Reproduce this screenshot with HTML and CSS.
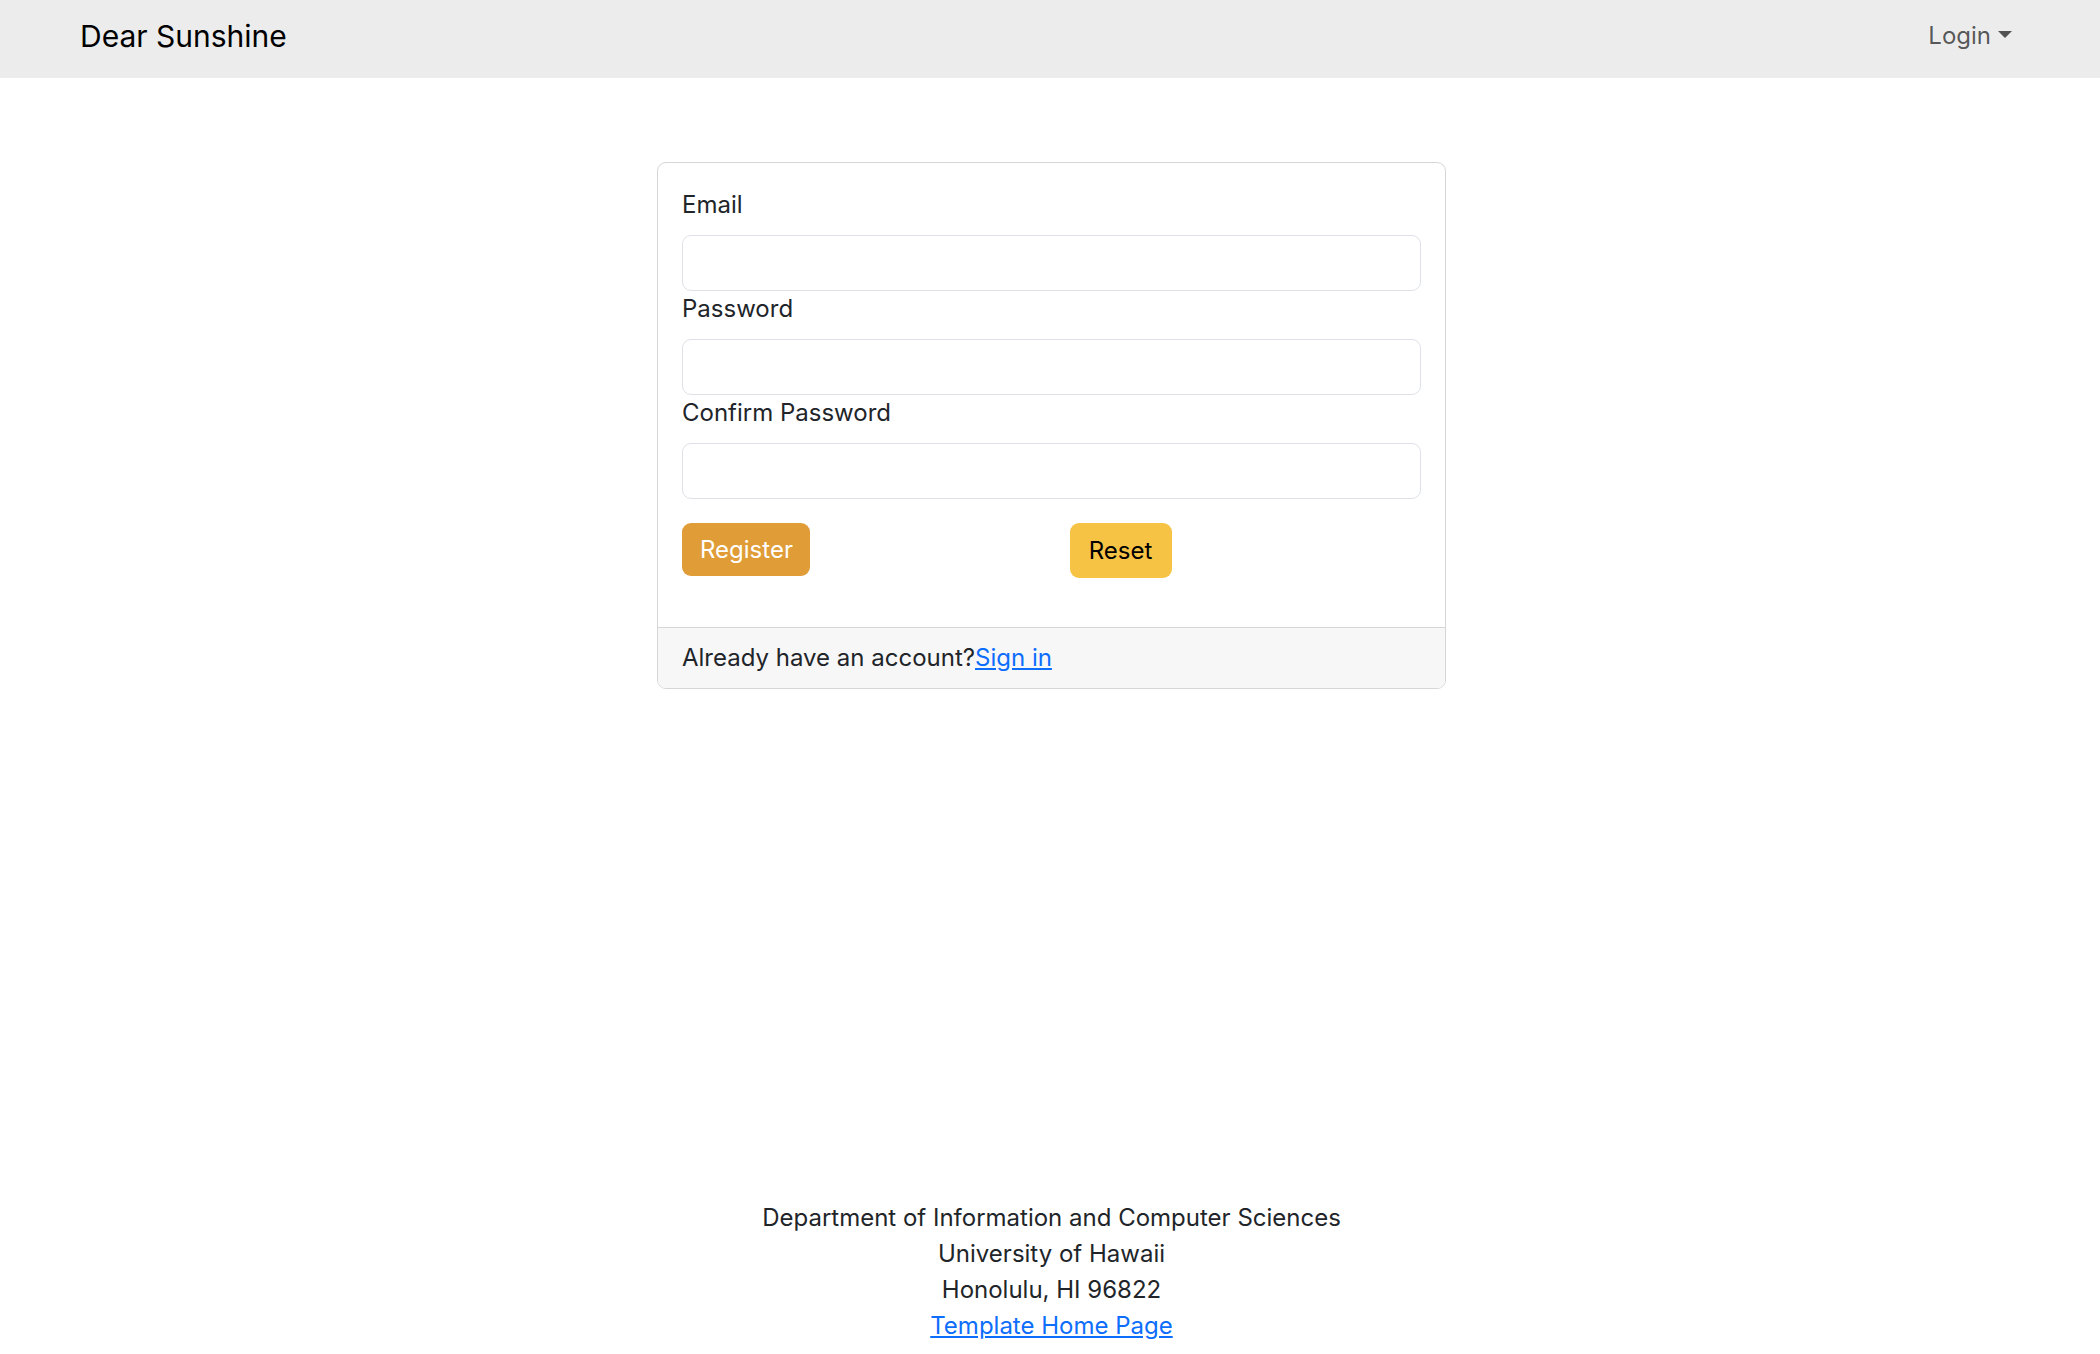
FILE: index.html
```html
<!DOCTYPE html>
<html lang="en">
<head>
<meta charset="utf-8">
<title>Dear Sunshine</title>
<link rel="stylesheet" href="styles.css">
</head>
<body>
<nav class="navbar">
  <div class="container nav-inner">
    <a class="brand" href="#">Dear Sunshine</a>
    <a class="nav-link" href="#">Login<span class="caret"></span></a>
  </div>
</nav>
<main class="main">
  <div class="card">
    <form class="card-body">
      <label class="label" for="email">Email</label>
      <input class="input" id="email" type="email">
      <label class="label" for="pw">Password</label>
      <input class="input" id="pw" type="password">
      <label class="label" for="pw2">Confirm Password</label>
      <input class="input" id="pw2" type="password">
      <div class="btn-row">
        <div class="btn-col"><button class="btn btn-register" type="button">Register</button></div>
        <div class="btn-col"><button class="btn btn-reset" type="reset">Reset</button></div>
      </div>
    </form>
    <div class="card-footer">Already have an account?<a class="link" href="#">Sign in</a></div>
  </div>
</main>
<footer class="footer">
  <div>Department of Information and Computer Sciences</div>
  <div>University of Hawaii</div>
  <div>Honolulu, HI 96822</div>
  <div><a class="link" href="#">Template Home Page</a></div>
</footer>
</body>
</html>
```
FILE: styles.css
```css
html, body {
  margin: 0;
  padding: 0;
}
body {
  font-family: Inter, "Liberation Sans", sans-serif;
  font-size: 24px;
  line-height: 36px;
  color: #212529;
  background: #ffffff;
  display: flex;
  flex-direction: column;
  min-height: 100vh;
}
.navbar {
  height: 78px;
  background: #ececec;
}
.container {
  width: 1980px;
  margin: 0 auto;
  padding: 0 16px 0 20px;
  box-sizing: border-box;
}
.nav-inner {
  display: flex;
  justify-content: space-between;
  align-items: flex-start;
}
.brand {
  font-size: 30px;
  line-height: 45px;
  padding-top: 14px;
  color: #000000;
  text-decoration: none;
}
.nav-link {
  font-size: 24px;
  line-height: 36px;
  padding: 18px 12px 0 12px;
  color: rgba(0, 0, 0, 0.65);
  text-decoration: none;
}
.caret {
  display: inline-block;
  margin-left: 7px;
  vertical-align: 6px;
  border-top: 7px solid rgba(0, 0, 0, 0.65);
  border-left: 7px solid transparent;
  border-right: 7px solid transparent;
  border-bottom: 0;
}
.main {
  padding-top: 84px;
  padding-left: 3px;
}
.card {
  width: 789px;
  margin: 0 auto;
  border: 1px solid #d6d6d6;
  border-radius: 9px;
  box-sizing: border-box;
  overflow: hidden;
}
.card-body {
  padding: 24px 24px 49px 24px;
  display: flex;
  flex-direction: column;
}
.label {
  display: block;
  margin-bottom: 12px;
}
.input {
  display: block;
  width: 100%;
  height: 56px;
  box-sizing: border-box;
  border: 1px solid #dee2e6;
  border-radius: 9px;
  padding: 9px 18px;
  font: inherit;
  background: #fff;
}
.btn-row {
  display: flex;
  margin: 24px -18px 0 -18px;
  align-items: flex-start;
}
.btn-col {
  flex: 1 1 0;
  padding: 0 18px;
}
.btn {
  font: inherit;
  border: none;
  border-radius: 9px;
  padding: 0 18px;
  cursor: pointer;
}
.btn-register {
  height: 53px;
  width: 128px;
  background: #e09c37;
  color: #ffffff;
}
.btn-reset {
  height: 55px;
  width: 102px;
  background: #f6c345;
  color: #000000;
}
.card-footer {
  background: #f7f7f7;
  border-top: 1px solid #d6d6d6;
  padding: 12px 24px;
}
.link {
  color: #0d6efd;
  text-decoration: underline;
}
.footer {
  margin-top: auto;
  text-align: center;
  padding-left: 3px;
  padding-bottom: 10px;
}
```
